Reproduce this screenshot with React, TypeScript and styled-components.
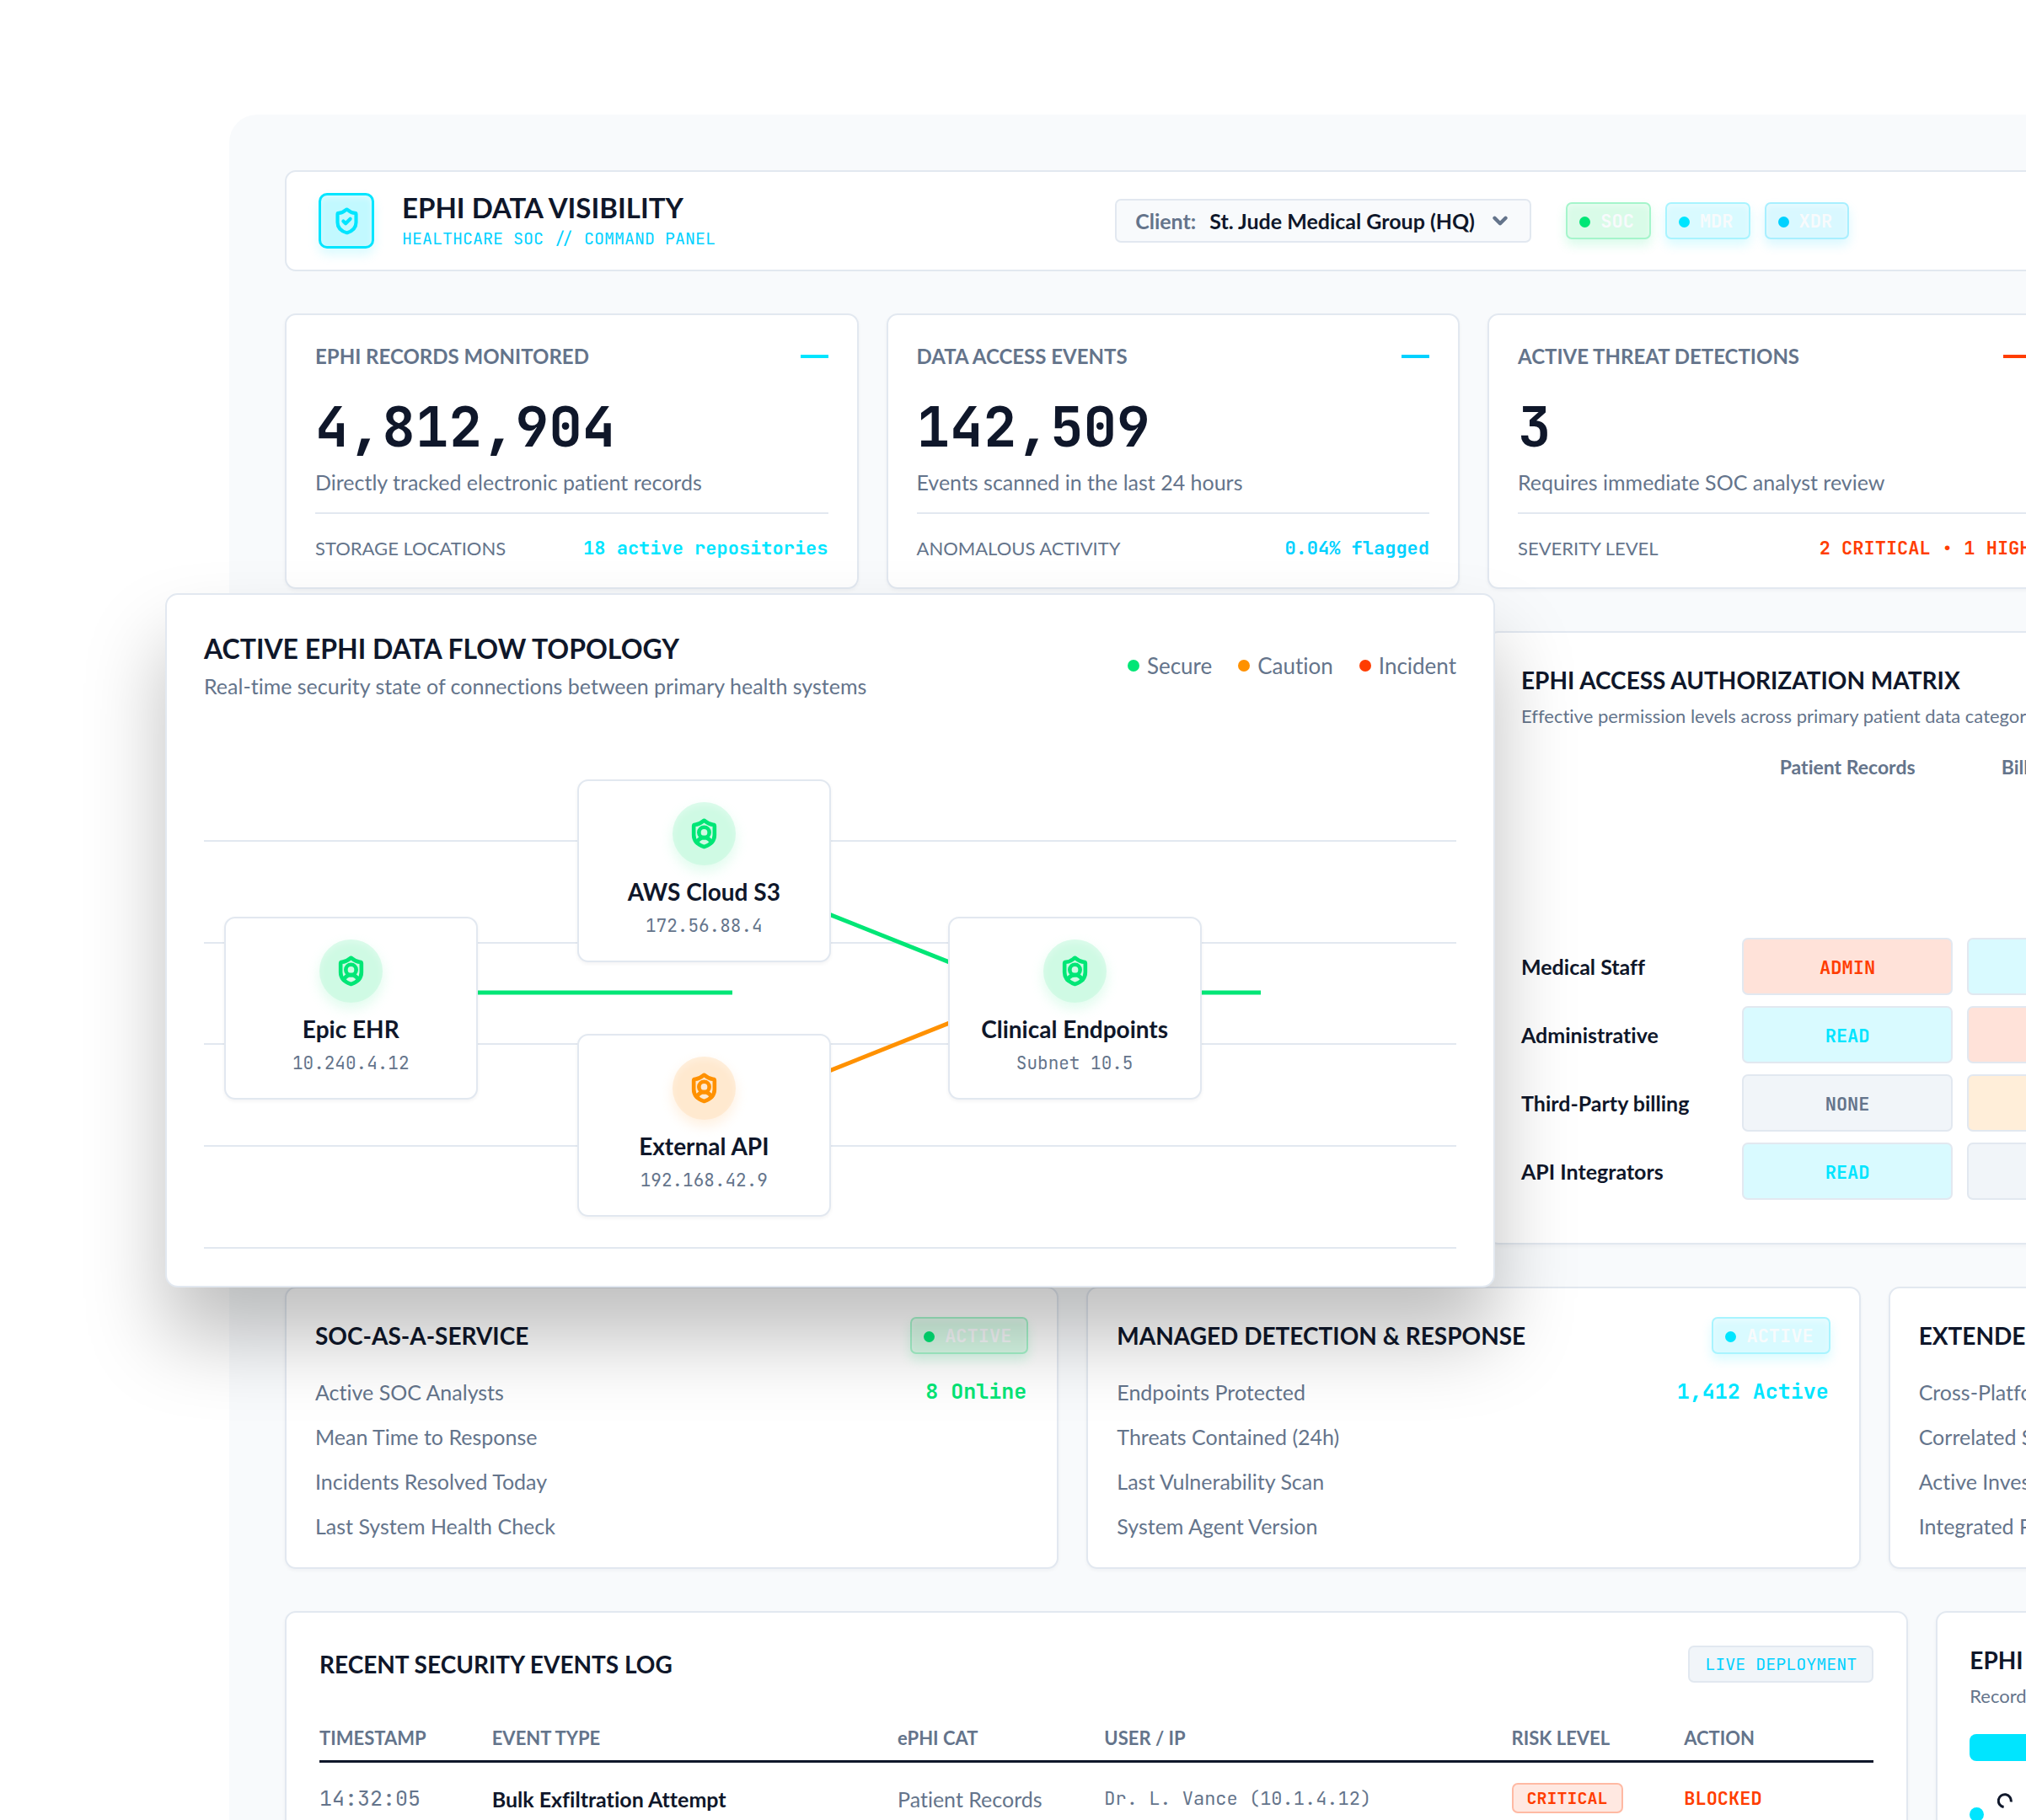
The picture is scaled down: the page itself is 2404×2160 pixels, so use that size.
import React from "react";
import styled, { createGlobalStyle } from "styled-components";
import { ShieldCheck, ShieldUser, ChevronDown } from "lucide-react";

const color = {
  ink: "#0f172a",
  slate: "#64748b",
  line: "#e2e8f0",
  canvas: "#f8fafc",
  mist: "#f1f5f9",
  cyan: "#00e5ff",
  sky: "#00d1ff",
  green: "#00e676",
  amber: "#ff9100",
  red: "#ff3d00",
};

const sans = `Lato, "Open Sans", sans-serif`;
const mono = `"JetBrains Mono", "DejaVu Sans Mono", monospace`;

const GlobalStyle = createGlobalStyle`
  * { box-sizing: border-box; }
  body {
    margin: 0;
    background: #ffffff;
    color: ${color.ink};
    font-family: ${sans};
    font-variant-ligatures: no-common-ligatures;
  }
  h1, h2, p, dl, dd, dt, ul { margin: 0; padding: 0; }
`;

const Page = styled.div`
  height: 100vh;
  overflow: hidden;
  padding: 136px 0 0 272px;
`;

const Board = styled.main`
  display: flex;
  flex-direction: column;
  gap: 50px;
  width: calc(100vw + 549px);
  min-height: 100vh;
  padding: 66px;
  border-radius: 33px;
  background: ${color.canvas};
`;

const Card = styled.section`
  border: 2px solid ${color.line};
  border-radius: 13px;
  background: #ffffff;
  box-shadow: 0 2px 4px rgba(15, 23, 42, 0.04);
`;

const TopBar = styled(Card).attrs({ as: "header" })`
  display: grid;
  grid-template-columns: 1fr 1.9fr;
  align-items: center;
  padding: 25px 38px;
  box-shadow: none;
`;

const Brand = styled.div`
  display: flex;
  align-items: center;
  gap: 33px;
`;

const Logo = styled.div`
  display: grid;
  place-items: center;
  width: 66px;
  height: 66px;
  border: 3px solid ${color.cyan};
  border-radius: 10px;
  color: ${color.cyan};
  background: #c2f9ff;
  box-shadow: 0 7px 13px rgba(0, 229, 255, 0.15), inset 0 3px 7px rgba(255, 255, 255, 0.4);
`;

const BrandText = styled.div`
  display: flex;
  flex-direction: column;
  gap: 8px;
`;

const BrandTitle = styled.h1`
  font-size: 33px;
  line-height: 34px;
  font-weight: 700;
`;

const BrandTag = styled.p`
  font: 400 20px/24px ${mono};
  color: ${color.sky};
`;

const Controls = styled.div`
  display: flex;
  align-items: center;
  gap: 41px;
`;

const ClientPicker = styled.div`
  display: flex;
  align-items: center;
  gap: 16px;
  height: 52px;
  padding: 0 22px;
  border: 2px solid ${color.line};
  border-radius: 7px;
  background: ${color.canvas};
  color: ${color.slate};
  font-size: 25px;
  font-weight: 700;
`;

const ClientSelect = styled.select`
  appearance: none;
  padding: 0;
  border: 0;
  background: transparent;
  color: ${color.ink};
  font: 700 25px/30px ${sans};
`;

const Badges = styled.ul`
  display: flex;
  gap: 17px;
  list-style: none;
`;

const tints = {
  green: { dot: color.green, fill: "#d9fbe8", edge: "#a5f5cb", glow: "rgba(0, 230, 118, 0.15)" },
  cyan: { dot: color.cyan, fill: "#d9faff", edge: "#a8f4ff", glow: "rgba(0, 229, 255, 0.15)" },
  sky: { dot: color.sky, fill: "#d9f8ff", edge: "#a8efff", glow: "rgba(0, 209, 255, 0.15)" },
};
type Tint = keyof typeof tints;

const StatusBadge = styled.span<{ $tint: Tint }>`
  display: inline-flex;
  align-items: center;
  gap: 12px;
  height: 44px;
  padding: 2px 18px 0 14px;
  border: 2px solid ${(p) => tints[p.$tint].edge};
  border-radius: 7px;
  background: ${(p) => tints[p.$tint].fill};
  box-shadow: 0 7px 13px ${(p) => tints[p.$tint].glow}, inset 0 3px 7px rgba(255, 255, 255, 0.4);
  color: ${color.canvas};
  font: 700 22px/26px ${mono};

  &::before {
    content: "";
    width: 13px;
    height: 13px;
    border-radius: 50%;
    background: ${(p) => tints[p.$tint].dot};
  }
`;

const KpiGrid = styled.div`
  display: grid;
  grid-template-columns: repeat(4, 1fr);
  gap: 33px;
`;

const KpiCard = styled(Card)`
  padding: 35px 34px 33px;
`;

const KpiHead = styled.div`
  display: flex;
  align-items: center;
  justify-content: space-between;
  margin-bottom: 35px;
`;

const KpiLabel = styled.h2`
  color: ${color.slate};
  font-size: 24px;
  line-height: 28px;
  font-weight: 700;
`;

const Dash = styled.span<{ $color: string }>`
  width: 33px;
  height: 4px;
  background: ${(p) => p.$color};
`;

const KpiValue = styled.p`
  font: 700 66px/70px ${mono};
  margin-bottom: 16px;
`;

const KpiNote = styled.p`
  color: ${color.slate};
  font-size: 25px;
  line-height: 28px;
`;

const KpiFoot = styled.div`
  display: flex;
  justify-content: space-between;
  margin-top: 22px;
  padding-top: 28px;
  border-top: 2px solid ${color.line};
  color: ${color.slate};
  font-size: 22px;
  line-height: 26px;
`;

const KpiFact = styled.span<{ $color: string }>`
  color: ${(p) => p.$color};
  font: 700 22px/26px ${mono};
`;

const MidGrid = styled.div`
  display: grid;
  grid-template-columns: 1fr 1fr;
  gap: 33px;
`;

const FloatSlot = styled.div`
  position: relative;
`;

/* The topology panel is lifted off the board and overlaps its neighbours. */
const FloatPanel = styled(Card)`
  position: absolute;
  z-index: 2;
  inset: -45px -42px -51px -142px;
  display: flex;
  flex-direction: column;
  padding: 44px;
  border-radius: 15px;
  box-shadow: 0 60px 94px rgba(0, 0, 0, 0.25);
`;

const FloatHead = styled.div`
  display: flex;
  align-items: center;
  justify-content: space-between;
  margin-bottom: 48px;
`;

const FloatTitle = styled.h2`
  font-size: 32px;
  line-height: 40px;
  font-weight: 700;
`;

const FloatNote = styled.p`
  margin-top: 8px;
  color: ${color.slate};
  font-size: 25px;
  line-height: 32px;
`;

const Legend = styled.ul`
  display: flex;
  gap: 31px;
  list-style: none;
  color: ${color.slate};
  font-size: 26px;
  line-height: 32px;
`;

const LegendItem = styled.li<{ $color: string }>`
  display: flex;
  align-items: center;
  gap: 9px;

  &::before {
    content: "";
    width: 14px;
    height: 14px;
    border-radius: 50%;
    background: ${(p) => p.$color};
  }
`;

const Diagram = styled.div`
  position: relative;
  display: grid;
  grid-template-rows: repeat(5, 1fr);
  flex: 1;
`;

const GridLine = styled.div`
  border-bottom: 2px solid ${color.line};
`;

const Wires = styled.svg`
  position: absolute;
  inset: 0;
  width: 100%;
  height: 100%;
`;

const Node = styled.div<{ $x: number; $y: number }>`
  position: absolute;
  left: ${(p) => p.$x}%;
  top: ${(p) => p.$y}%;
  display: flex;
  flex-direction: column;
  align-items: center;
  width: 301px;
  height: 217px;
  padding-top: 25px;
  border: 2px solid ${color.line};
  border-radius: 13px;
  background: #ffffff;
  box-shadow: 0 2px 4px rgba(15, 23, 42, 0.05);
`;

const NodeIcon = styled.div<{ $color: string; $fill: string }>`
  display: grid;
  place-items: center;
  width: 75px;
  height: 75px;
  border-radius: 50%;
  color: ${(p) => p.$color};
  background: ${(p) => p.$fill};
  box-shadow: 0 7px 15px ${(p) => p.$fill}aa, inset 0 4px 8px rgba(255, 255, 255, 0.3);
`;

const NodeName = styled.p`
  margin-top: 14px;
  font-size: 28px;
  line-height: 34px;
  font-weight: 700;
`;

const NodeAddress = styled.p`
  margin-top: 11px;
  color: ${color.slate};
  font: 400 21px/26px ${mono};
`;

const PanelCard = styled(Card)`
  padding: 38px 38px 51px;
`;

const PanelTitle = styled.h2`
  font-size: 28px;
  line-height: 36px;
  font-weight: 700;
  white-space: nowrap;
`;

const PanelNote = styled.p`
  margin-top: 12px;
  color: ${color.slate};
  font-size: 22px;
  line-height: 26px;
  white-space: nowrap;
`;

const Matrix = styled.table`
  display: grid;
  grid-template-columns: 245px repeat(4, 1fr);
  grid-template-rows: 203px repeat(4, 68px);
  gap: 13px 17px;
  margin-top: 34px;

  thead,
  tbody,
  tr {
    display: contents;
  }
`;

const MatrixHead = styled.th`
  padding: 0;
  color: ${color.slate};
  font-size: 23px;
  line-height: 26px;
  font-weight: 700;
`;

const RoleCell = styled.th`
  display: flex;
  align-items: center;
  padding: 0;
  font-size: 25px;
  font-weight: 700;
  white-space: nowrap;
`;

const levels = {
  ADMIN: { text: color.red, fill: "#ffe2d9" },
  READ: { text: color.cyan, fill: "#d9faff" },
  WRITE: { text: color.amber, fill: "#ffeed9" },
  NONE: { text: color.slate, fill: color.mist },
};
type Level = keyof typeof levels;

const LevelCell = styled.td<{ $level: Level }>`
  display: flex;
  align-items: center;
  justify-content: center;
  padding: 3px 0 0;
  border: 2px solid ${color.line};
  border-radius: 7px;
  color: ${(p) => levels[p.$level].text};
  background: ${(p) => levels[p.$level].fill};
  font: 700 22px/26px ${mono};
`;

const ServiceGrid = styled.div`
  display: grid;
  grid-template-columns: repeat(3, 1fr);
  gap: 33px;
`;

const ServiceCard = styled(Card)`
  padding: 34px;
`;

const ServiceHead = styled.div`
  display: flex;
  align-items: center;
  justify-content: space-between;
  margin-bottom: 30px;
`;

const ServiceFacts = styled.dl`
  display: flex;
  flex-direction: column;
  gap: 23px;
`;

const ServiceRow = styled.div`
  display: flex;
  justify-content: space-between;
  font-size: 25px;
  line-height: 30px;

  dt {
    color: ${color.slate};
  }
`;

const ServiceValue = styled.dd<{ $color: string }>`
  padding-right: 2px;
  color: ${(p) => p.$color};
  font: 700 25px/28px ${mono};
`;

const BottomGrid = styled.div`
  display: grid;
  grid-template-columns: 1927fr 862fr;
  gap: 33px;
`;

const LogCard = styled(Card)`
  padding: 39px;
`;

const LogHead = styled.div`
  display: flex;
  align-items: center;
  justify-content: space-between;
  margin-bottom: 53px;
`;

const LiveTag = styled.span`
  padding: 8px 18px;
  border: 2px solid ${color.line};
  border-radius: 7px;
  background: ${color.mist};
  color: ${color.sky};
  font: 400 20px/24px ${mono};
`;

const LogTable = styled.table`
  width: 100%;
  table-layout: fixed;
  border-collapse: collapse;
  text-align: left;
`;

const LogTh = styled.th<{ $width: string }>`
  width: ${(p) => p.$width};
  padding: 0 0 13px;
  border-bottom: 3px solid ${color.ink};
  color: ${color.slate};
  font-size: 22px;
  line-height: 26px;
  font-weight: 700;
`;

const LogTd = styled.td<{ $strong?: boolean }>`
  padding: 24px 0;
  vertical-align: top;
  color: ${(p) => (p.$strong ? color.ink : color.slate)};
  font-size: 25px;
  line-height: 38px;
  font-weight: ${(p) => (p.$strong ? 700 : 400)};
`;

const Time = styled.time`
  display: block;
  font: 400 25px/36px ${mono};
`;

const User = styled.span`
  display: block;
  font: 400 22px/38px ${mono};
`;

const RiskTag = styled.span`
  display: block;
  width: max-content;
  padding: 2px 16px;
  border: 2px solid #ffb9a3;
  border-radius: 7px;
  background: #ffe8e1;
  color: ${color.red};
  font: 700 20px/28px ${mono};
`;

const Action = styled.strong`
  display: block;
  color: ${color.red};
  font: 700 22px/38px ${mono};
`;

const ShareCard = styled(Card)`
  padding: 38px;
`;

const ShareBar = styled.div`
  height: 32px;
  margin-top: 32px;
  border-radius: 8px;
  background: ${color.cyan};
`;

const ShareKey = styled.div`
  display: flex;
  align-items: flex-start;
  gap: 16px;
  margin-top: 38px;
`;

const ShareDot = styled.span`
  width: 17px;
  height: 17px;
  margin-top: 17px;
  border-radius: 50%;
  background: ${color.cyan};
`;

const kpis = [
  {
    label: "EPHI RECORDS MONITORED",
    value: "4,812,904",
    note: "Directly tracked electronic patient records",
    foot: "STORAGE LOCATIONS",
    fact: "18 active repositories",
    accent: color.cyan,
  },
  {
    label: "DATA ACCESS EVENTS",
    value: "142,509",
    note: "Events scanned in the last 24 hours",
    foot: "ANOMALOUS ACTIVITY",
    fact: "0.04% flagged",
    accent: color.sky,
  },
  {
    label: "ACTIVE THREAT DETECTIONS",
    value: "3",
    note: "Requires immediate SOC analyst review",
    foot: "SEVERITY LEVEL",
    fact: "2 CRITICAL • 1 HIGH",
    accent: color.red,
  },
];

const nodes = [
  { name: "Epic EHR", address: "10.240.4.12", x: 1.6, y: 34.8, color: color.green, fill: "#cffae4" },
  { name: "AWS Cloud S3", address: "172.56.88.4", x: 29.8, y: 7.8, color: color.green, fill: "#cffae4" },
  { name: "External API", address: "192.168.42.9", x: 29.8, y: 57.8, color: color.amber, fill: "#ffe9cf" },
  { name: "Clinical Endpoints", address: "Subnet 10.5", x: 59.4, y: 34.8, color: color.green, fill: "#cffae4" },
];

const matrix: { role: string; cells: Level[] }[] = [
  { role: "Medical Staff", cells: ["ADMIN", "READ"] },
  { role: "Administrative", cells: ["READ", "ADMIN"] },
  { role: "Third-Party billing", cells: ["NONE", "WRITE"] },
  { role: "API Integrators", cells: ["READ", "NONE"] },
];

const services: { title: string; tint?: Tint; value?: string; accent: string; rows: string[] }[] = [
  {
    title: "SOC-AS-A-SERVICE",
    tint: "green",
    value: "8 Online",
    accent: color.green,
    rows: ["Active SOC Analysts", "Mean Time to Response", "Incidents Resolved Today", "Last System Health Check"],
  },
  {
    title: "MANAGED DETECTION & RESPONSE",
    tint: "cyan",
    value: "1,412 Active",
    accent: color.cyan,
    rows: ["Endpoints Protected", "Threats Contained (24h)", "Last Vulnerability Scan", "System Agent Version"],
  },
  {
    title: "EXTENDED DETECTION",
    tint: "sky",
    accent: color.sky,
    rows: ["Cross-Platform Signals", "Correlated Sources", "Active Investigations", "Integrated Platforms"],
  },
];

const logColumns = [
  ["TIMESTAMP", "11.1%"],
  ["EVENT TYPE", "26.1%"],
  ["ePHI CAT", "13.3%"],
  ["USER / IP", "26.2%"],
  ["RISK LEVEL", "11.1%"],
  ["ACTION", "12.2%"],
];

export default function App() {
  return (
    <Page>
      <GlobalStyle />
      <Board>
        <TopBar>
          <Brand>
            <Logo>
              <ShieldCheck size={33} strokeWidth={3} />
            </Logo>
            <BrandText>
              <BrandTitle>EPHI DATA VISIBILITY</BrandTitle>
              <BrandTag>HEALTHCARE SOC // COMMAND PANEL</BrandTag>
            </BrandText>
          </Brand>
          <Controls>
            <ClientPicker>
              <label htmlFor="client">Client:</label>
              <ClientSelect id="client" defaultValue="hq">
                <option value="hq">St. Jude Medical Group (HQ)</option>
              </ClientSelect>
              <ChevronDown size={26} strokeWidth={4} />
            </ClientPicker>
            <Badges>
              <li><StatusBadge $tint="green">SOC</StatusBadge></li>
              <li><StatusBadge $tint="cyan">MDR</StatusBadge></li>
              <li><StatusBadge $tint="sky">XDR</StatusBadge></li>
            </Badges>
          </Controls>
        </TopBar>

        <KpiGrid>
          {kpis.map((k) => (
            <KpiCard key={k.label}>
              <KpiHead>
                <KpiLabel>{k.label}</KpiLabel>
                <Dash $color={k.accent} />
              </KpiHead>
              <KpiValue>{k.value}</KpiValue>
              <KpiNote>{k.note}</KpiNote>
              <KpiFoot>
                <span>{k.foot}</span>
                <KpiFact $color={k.accent}>{k.fact}</KpiFact>
              </KpiFoot>
            </KpiCard>
          ))}
        </KpiGrid>

        <MidGrid>
          <FloatSlot>
            <FloatPanel>
              <FloatHead>
                <div>
                  <FloatTitle>ACTIVE EPHI DATA FLOW TOPOLOGY</FloatTitle>
                  <FloatNote>Real-time security state of connections between primary health systems</FloatNote>
                </div>
                <Legend>
                  <LegendItem $color={color.green}>Secure</LegendItem>
                  <LegendItem $color={color.amber}>Caution</LegendItem>
                  <LegendItem $color={color.red}>Incident</LegendItem>
                </Legend>
              </FloatHead>
              <Diagram>
                {[0, 1, 2, 3, 4].map((n) => (
                  <GridLine key={n} />
                ))}
                <Wires viewBox="0 0 1486 606" preserveAspectRatio="none" fill="none" strokeWidth="5">
                  <path d="M300 301H627M1150 301H1254" stroke={color.green} />
                  <path d="M730 203L900 271" stroke={color.green} />
                  <path d="M730 399L900 331" stroke={color.amber} />
                </Wires>
                {nodes.map((n) => (
                  <Node key={n.name} $x={n.x} $y={n.y}>
                    <NodeIcon $color={n.color} $fill={n.fill}>
                      <ShieldUser size={37} strokeWidth={3} />
                    </NodeIcon>
                    <NodeName>{n.name}</NodeName>
                    <NodeAddress>{n.address}</NodeAddress>
                  </Node>
                ))}
              </Diagram>
            </FloatPanel>
          </FloatSlot>

          <PanelCard>
            <PanelTitle>EPHI ACCESS AUTHORIZATION MATRIX</PanelTitle>
            <PanelNote>Effective permission levels across primary patient data categories</PanelNote>
            <Matrix>
              <thead>
                <tr>
                  <td />
                  <MatrixHead scope="col">Patient Records</MatrixHead>
                  <MatrixHead scope="col">Billing Payments</MatrixHead>
                  <td />
                  <td />
                </tr>
              </thead>
              <tbody>
                {matrix.map((row) => (
                  <tr key={row.role}>
                    <RoleCell scope="row">{row.role}</RoleCell>
                    {row.cells.map((level, i) => (
                      <LevelCell key={i} $level={level}>
                        {level}
                      </LevelCell>
                    ))}
                    <td />
                    <td />
                  </tr>
                ))}
              </tbody>
            </Matrix>
          </PanelCard>
        </MidGrid>

        <ServiceGrid>
          {services.map((s) => (
            <ServiceCard key={s.title}>
              <ServiceHead>
                <PanelTitle>{s.title}</PanelTitle>
                {s.tint && <StatusBadge $tint={s.tint}>ACTIVE</StatusBadge>}
              </ServiceHead>
              <ServiceFacts>
                {s.rows.map((label, i) => (
                  <ServiceRow key={label}>
                    <dt>{label}</dt>
                    {i === 0 && s.value && <ServiceValue $color={s.accent}>{s.value}</ServiceValue>}
                  </ServiceRow>
                ))}
              </ServiceFacts>
            </ServiceCard>
          ))}
        </ServiceGrid>

        <BottomGrid>
          <LogCard>
            <LogHead>
              <PanelTitle>RECENT SECURITY EVENTS LOG</PanelTitle>
              <LiveTag>LIVE DEPLOYMENT</LiveTag>
            </LogHead>
            <LogTable>
              <thead>
                <tr>
                  {logColumns.map(([name, width]) => (
                    <LogTh key={name} scope="col" $width={width}>
                      {name}
                    </LogTh>
                  ))}
                </tr>
              </thead>
              <tbody>
                <tr>
                  <LogTd><Time>14:32:05</Time></LogTd>
                  <LogTd $strong>Bulk Exfiltration Attempt</LogTd>
                  <LogTd>Patient Records</LogTd>
                  <LogTd><User>Dr. L. Vance (10.1.4.12)</User></LogTd>
                  <LogTd><RiskTag>CRITICAL</RiskTag></LogTd>
                  <LogTd><Action>BLOCKED</Action></LogTd>
                </tr>
              </tbody>
            </LogTable>
          </LogCard>

          <ShareCard>
            <PanelTitle>EPHI BY CATEGORY</PanelTitle>
            <PanelNote>Record distribution</PanelNote>
            <ShareBar />
            <ShareKey>
              <ShareDot />
              <svg width="18" height="18" viewBox="0 0 18 18" fill="none" stroke={color.ink} strokeWidth="3">
                <path d="M16.2 10.4A7.5 7.5 0 1 0 7.6 16.6" />
              </svg>
            </ShareKey>
          </ShareCard>
        </BottomGrid>
      </Board>
    </Page>
  );
}
